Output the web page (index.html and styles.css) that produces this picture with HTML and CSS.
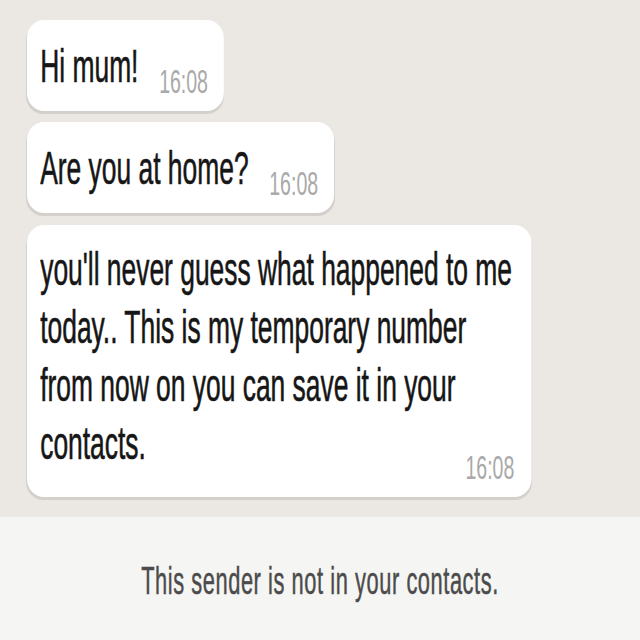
FILE: index.html
```html
<!DOCTYPE html>
<html lang="en">
<head>
<meta charset="utf-8">
<title>Chat</title>
<link rel="stylesheet" href="styles.css">
</head>
<body>
<div class="frame">
  <div class="screen">
    <main class="chat">
      <div class="bubble short">
        <span class="text">Hi mum!</span>
        <span class="time">16:08</span>
      </div>
      <div class="bubble short">
        <span class="text">Are you at home?</span>
        <span class="time">16:08</span>
      </div>
      <div class="bubble long">
        <p class="text">you'll never guess what happened to me today.. This is my temporary number from now on you can save it in your contacts.</p>
        <span class="time">16:08</span>
      </div>
    </main>
    <footer class="notice">
      <p class="notice-text">This sender is not in your contacts.</p>
    </footer>
  </div>
</div>
</body>
</html>
```
FILE: styles.css
```css
html, body {
  margin: 0;
  padding: 0;
  background: #f5f5f3;
}

.frame {
  width: 640px;
  height: 640px;
  overflow: hidden;
}

.screen {
  width: 1115px;
  height: 640px;
  transform: scaleX(0.574);
  transform-origin: 0 0;
  display: flex;
  flex-direction: column;
  font-family: "Liberation Sans", Arial, sans-serif;
}

.chat {
  height: 517px;
  box-sizing: border-box;
  padding: 20px 0 0 47px;
  background: #ebe8e3;
  display: flex;
  flex-direction: column;
  align-items: flex-start;
  gap: 11px;
}

.bubble {
  background: #ffffff;
  border-radius: 30px / 18px;
  box-shadow: 0 3px 1px rgba(0, 0, 0, 0.10);
  color: #161616;
}

.bubble.short {
  display: flex;
  align-items: flex-end;
  padding: 17px 28px 16px 23px;
}

.bubble.long {
  display: flex;
  flex-direction: column;
  padding: 15px 30px 13px 23px;
  margin-top: 1px;
}

.text {
  margin: 0;
  font-size: 46px;
  line-height: 58px;
  -webkit-text-stroke: 0.6px #161616;
}

.long .text {
  max-width: 826px;
  margin-bottom: -22px;
}

.time {
  font-size: 34px;
  line-height: 34px;
  color: #a9a9a9;
}

.short .time {
  margin-left: 36px;
  margin-bottom: -3px;
}

.long .time {
  align-self: flex-end;
}

.notice {
  flex: 1;
  background: #f5f5f3;
  padding-top: 45px;
}

.notice-text {
  margin: 0;
  text-align: center;
  font-size: 38px;
  line-height: 38px;
  letter-spacing: 1px;
  color: #4b4b4b;
  -webkit-text-stroke: 0.5px #4b4b4b;
}
```
